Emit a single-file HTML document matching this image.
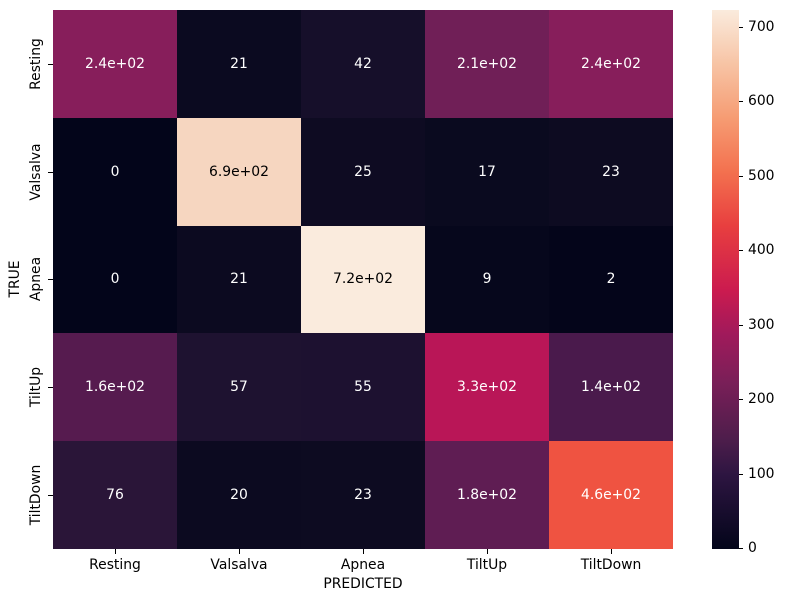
<!DOCTYPE html>
<html><head><style>
body{margin:0;width:785px;height:602px;background:#fff;font-family:"DejaVu Sans","Liberation Sans",sans-serif;overflow:hidden;position:relative}
.c{position:absolute;width:124px;height:107.8px;display:flex;align-items:center;justify-content:center;font-size:13.9px;color:#fff}
.k{color:#000}
.t{position:absolute;font-size:13.9px;color:#000;white-space:nowrap}
</style></head><body>
<div style="position:absolute;left:53px;top:10px;width:620px;height:539px">
<div class="c" style="left:0;top:0;background:#871e5b">2.4e+02</div>
<div class="c" style="left:124px;top:0;background:#0b0a20">21</div>
<div class="c" style="left:248px;top:0;background:#160f2a">42</div>
<div class="c" style="left:372px;top:0;background:#701f57">2.1e+02</div>
<div class="c" style="left:496px;top:0;background:#871e5b">2.4e+02</div>
<div class="c" style="left:0;top:107.8px;background:#03051a">0</div>
<div class="c k" style="left:124px;top:107.8px;background:#f6d6c0">6.9e+02</div>
<div class="c" style="left:248px;top:107.8px;background:#0e0b22">25</div>
<div class="c" style="left:372px;top:107.8px;background:#0a0a1f">17</div>
<div class="c" style="left:496px;top:107.8px;background:#0d0b21">23</div>
<div class="c" style="left:0;top:215.6px;background:#03051a">0</div>
<div class="c" style="left:124px;top:215.6px;background:#0c0a20">21</div>
<div class="c k" style="left:248px;top:215.6px;background:#faebdd">7.2e+02</div>
<div class="c" style="left:372px;top:215.6px;background:#06071c">9</div>
<div class="c" style="left:496px;top:215.6px;background:#04051a">2</div>
<div class="c" style="left:0;top:323.4px;background:#561b4f">1.6e+02</div>
<div class="c" style="left:124px;top:323.4px;background:#1e1230">57</div>
<div class="c" style="left:248px;top:323.4px;background:#1d1130">55</div>
<div class="c" style="left:372px;top:323.4px;background:#b91657">3.3e+02</div>
<div class="c" style="left:496px;top:323.4px;background:#4a1a4c">1.4e+02</div>
<div class="c" style="left:0;top:431.2px;background:#2a1538">76</div>
<div class="c" style="left:124px;top:431.2px;background:#0c0a20">20</div>
<div class="c" style="left:248px;top:431.2px;background:#0d0b21">23</div>
<div class="c" style="left:372px;top:431.2px;background:#5f1d53">1.8e+02</div>
<div class="c" style="left:496px;top:431.2px;background:#ef5341">4.6e+02</div>
</div>
<div style="position:absolute;top:549px;left:115px;width:1px;height:5px;background:#000"></div>
<div style="position:absolute;top:549px;left:239px;width:1px;height:5px;background:#000"></div>
<div style="position:absolute;top:549px;left:363px;width:1px;height:5px;background:#000"></div>
<div style="position:absolute;top:549px;left:487px;width:1px;height:5px;background:#000"></div>
<div style="position:absolute;top:549px;left:611px;width:1px;height:5px;background:#000"></div>
<div class="t" style="left:65px;width:100px;text-align:center;top:557px">Resting</div>
<div class="t" style="left:189px;width:100px;text-align:center;top:557px">Valsalva</div>
<div class="t" style="left:313px;width:100px;text-align:center;top:557px">Apnea</div>
<div class="t" style="left:437px;width:100px;text-align:center;top:557px">TiltUp</div>
<div class="t" style="left:561px;width:100px;text-align:center;top:557px">TiltDown</div>
<div class="t" style="left:263px;width:200px;text-align:center;top:576px">PREDICTED</div>
<div style="position:absolute;left:48px;top:64px;width:5px;height:1px;background:#000"></div>
<div style="position:absolute;left:48px;top:172px;width:5px;height:1px;background:#000"></div>
<div style="position:absolute;left:48px;top:279px;width:5px;height:1px;background:#000"></div>
<div style="position:absolute;left:48px;top:387px;width:5px;height:1px;background:#000"></div>
<div style="position:absolute;left:48px;top:495px;width:5px;height:1px;background:#000"></div>
<div class="t" style="left:-14px;top:56px;width:100px;text-align:center;transform:rotate(-90deg)">Resting</div>
<div class="t" style="left:-14px;top:164px;width:100px;text-align:center;transform:rotate(-90deg)">Valsalva</div>
<div class="t" style="left:-14px;top:271px;width:100px;text-align:center;transform:rotate(-90deg)">Apnea</div>
<div class="t" style="left:-14px;top:379px;width:100px;text-align:center;transform:rotate(-90deg)">TiltUp</div>
<div class="t" style="left:-14px;top:487px;width:100px;text-align:center;transform:rotate(-90deg)">TiltDown</div>
<div class="t" style="left:-35px;top:271px;width:100px;text-align:center;transform:rotate(-90deg)">TRUE</div>
<div style="position:absolute;left:712px;top:10px;width:27px;height:539px;background:linear-gradient(to top,#03051a 0%,#2d1541 13.8%,#4c1d4b 20%,#7a1f58 31%,#a11a5b 40%,#cb1b4f 48%,#e83f3f 60%,#f3714f 70%,#f69c73 80%,#f7c4a5 90%,#faebdd 100%)"></div>
<div style="position:absolute;left:739px;top:548px;width:4px;height:1px;background:#000"></div><div class="t" style="left:748px;top:540px">0</div>
<div style="position:absolute;left:739px;top:474px;width:4px;height:1px;background:#000"></div><div class="t" style="left:748px;top:466px">100</div>
<div style="position:absolute;left:739px;top:399px;width:4px;height:1px;background:#000"></div><div class="t" style="left:748px;top:391px">200</div>
<div style="position:absolute;left:739px;top:325px;width:4px;height:1px;background:#000"></div><div class="t" style="left:748px;top:317px">300</div>
<div style="position:absolute;left:739px;top:250px;width:4px;height:1px;background:#000"></div><div class="t" style="left:748px;top:242px">400</div>
<div style="position:absolute;left:739px;top:176px;width:4px;height:1px;background:#000"></div><div class="t" style="left:748px;top:168px">500</div>
<div style="position:absolute;left:739px;top:101px;width:4px;height:1px;background:#000"></div><div class="t" style="left:748px;top:93px">600</div>
<div style="position:absolute;left:739px;top:27px;width:4px;height:1px;background:#000"></div><div class="t" style="left:748px;top:19px">700</div>
</body></html>
